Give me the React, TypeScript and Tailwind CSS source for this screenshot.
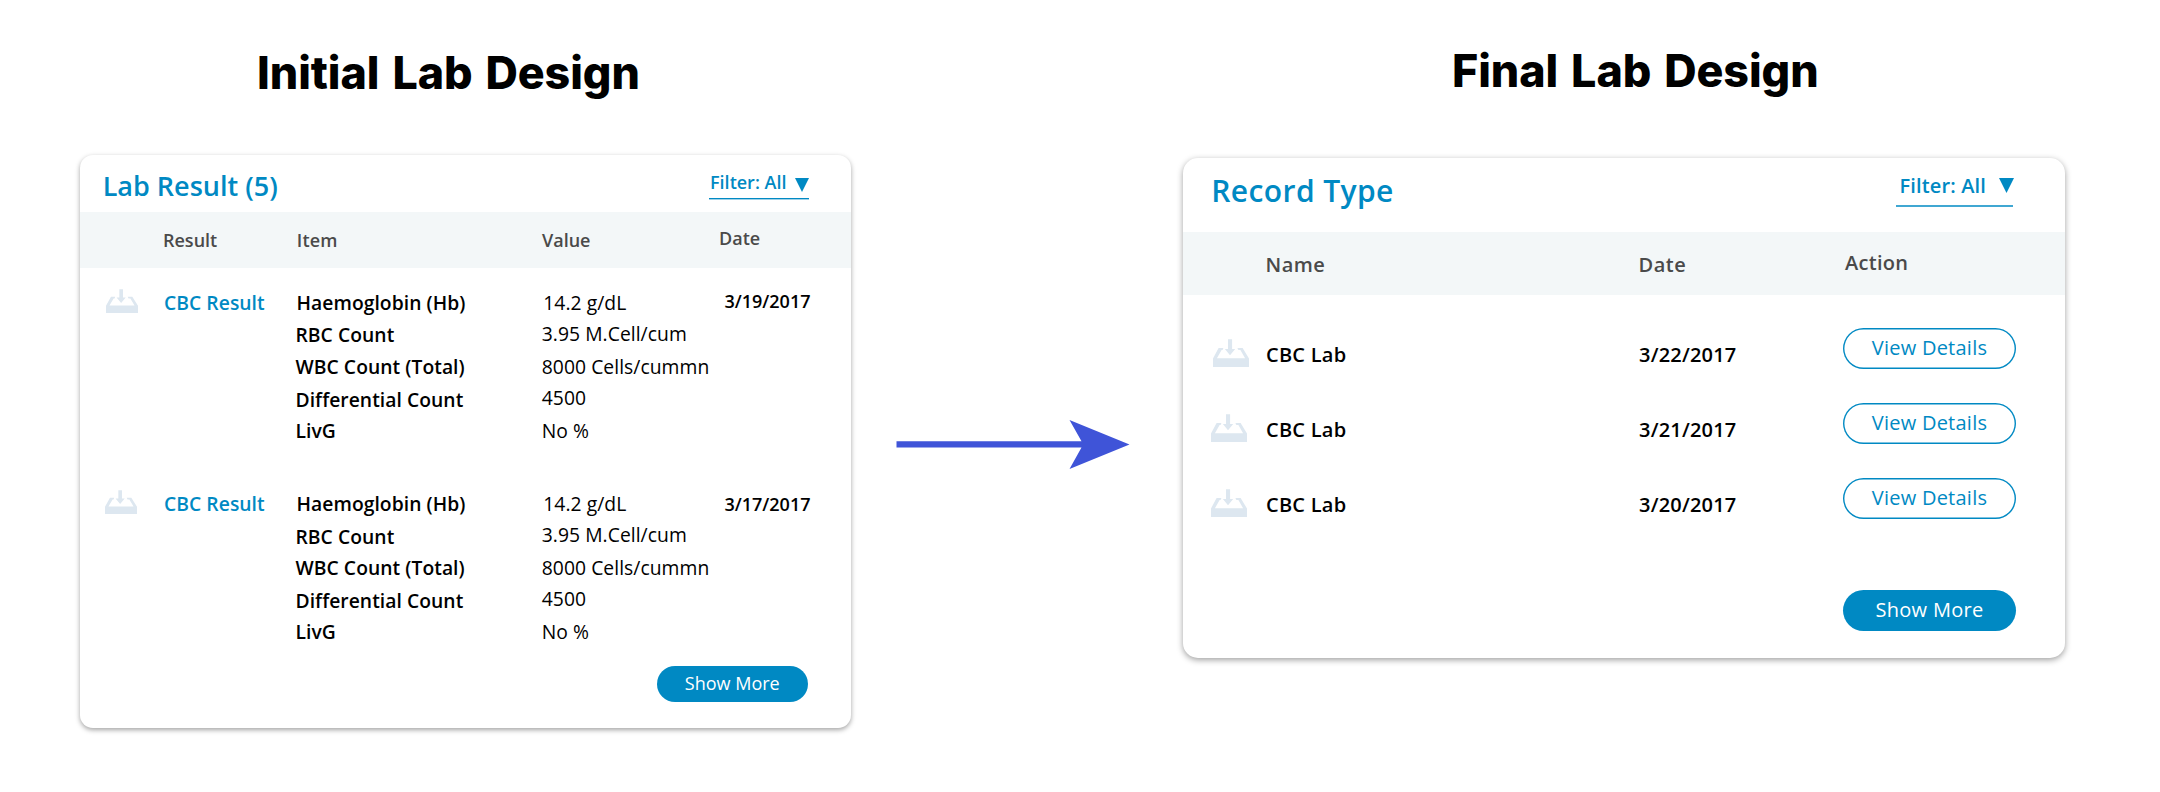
type Line = { text: string; gap: string };

const itemsA: Line[] = [
  { text: "Haemoglobin (Hb)", gap: "pl-px" },
  { text: "RBC Count", gap: "mt-[5px]" },
  { text: "WBC Count (Total)", gap: "mt-[5px]" },
  { text: "Differential Count", gap: "mt-[6px]" },
  { text: "LivG", gap: "mt-[4px]" },
];

const itemsB: Line[] = [
  { text: "Haemoglobin (Hb)", gap: "pl-px" },
  { text: "RBC Count", gap: "mt-[6px]" },
  { text: "WBC Count (Total)", gap: "mt-[4px]" },
  { text: "Differential Count", gap: "mt-[6px]" },
  { text: "LivG", gap: "mt-[4px]" },
];

const values: Line[] = [
  { text: "14.2 g/dL", gap: "pl-[1.5px]" },
  { text: "3.95 M.Cell/cum", gap: "mt-[4px]" },
  { text: "8000 Cells/cummn", gap: "mt-[6px]" },
  { text: "4500", gap: "mt-[4px]" },
  { text: "No %", gap: "mt-[6px]" },
];

const results = [
  { date: "3/19/2017", items: itemsA, row: "pt-[21px]", icon: "pl-[26px]", dateGap: "" },
  { date: "3/17/2017", items: itemsB, row: "pt-[46px]", icon: "pl-[24.5px]", dateGap: "pt-[2px]" },
];

const records = [
  { name: "CBC Lab", date: "3/22/2017", icon: "pl-[30px]" },
  { name: "CBC Lab", date: "3/21/2017", icon: "pl-[28px]" },
  { name: "CBC Lab", date: "3/20/2017", icon: "pl-[28px]" },
];

function TrayIcon({ className }: { className: string }) {
  return (
    <svg viewBox="0 0 36 28" className={className} fill="#dde7f0" preserveAspectRatio="none">
      <path d="M0 28V19.6L5.6 9H10.4L9.6 11H8.6L3.9 19.2H32.1L27.4 11H25.4L24.4 9H29.6L36 19.6V28Z" />
      <path d="M15 0.3H19.1V10H22.2L17 16.3L11.9 10H15Z" />
    </svg>
  );
}

function Caret({ className }: { className: string }) {
  return (
    <svg viewBox="0 0 14 14" className={className} fill="#0089c3">
      <path d="M0 0H14L7 14Z" />
    </svg>
  );
}

function InitialCard() {
  return (
    <div className="mt-[55px] h-[573px] rounded-[13px] bg-white shadow-[0_2px_5px_rgba(0,0,0,0.36)]">
      <div className="flex h-[57px] items-start justify-between pr-[42px] pl-[22.7px]">
        <h2 className="mt-3 text-[27px] leading-[37px] font-semibold text-[#0089c3]">Lab Result (5)</h2>
        <div className="mt-[15px] flex h-[29px] w-[100px] items-start border-b border-[#0089c3] pl-px text-[18px] leading-[24px] font-semibold text-[#0089c3] shadow-[0_1px_0_#9fd1e8]">
          <span className="w-[85px] whitespace-nowrap">Filter: All</span>
          <Caret className="mt-2 h-[14px] w-[14px] shrink-0" />
        </div>
      </div>
      <div className="grid h-[56px] grid-cols-[83px_133px_245px_178px_1fr] bg-[#f3f7f8] pt-[14px] text-[18px] leading-[24px] font-semibold text-[#4a4a4a]">
        <span />
        <span className="mt-[2px]">Result</span>
        <span className="mt-[2px] pl-[0.7px] tracking-[0.2px]">Item</span>
        <span className="mt-[2px] pl-px">Value</span>
        <span>Date</span>
      </div>
      {results.map((r) => (
        <div
          key={r.date}
          className={`grid grid-cols-[83px_132.5px_246.3px_177.2px_1fr] text-[19.3px] leading-[27px] text-black ${r.row}`}
        >
          <div className={r.icon}>
            <TrayIcon className="h-[24px] w-[32px]" />
          </div>
          <span className="pl-px font-semibold tracking-[0.05px] text-[#0089c3]">CBC Result</span>
          <div className="font-semibold tracking-[0.05px]">
            {r.items.map((l) => (
              <div key={l.text} className={l.gap}>{l.text}</div>
            ))}
          </div>
          <div className="tracking-[0.05px] whitespace-nowrap">
            {values.map((l) => (
              <div key={l.text} className={l.gap}>{l.text}</div>
            ))}
          </div>
          <span className={`pl-[5.4px] text-[18px] leading-[24px] font-semibold ${r.dateGap}`}>{r.date}</span>
        </div>
      ))}
      <div className="flex justify-end pt-[21px] pr-[43px]">
        <button className="flex h-[36px] w-[151.5px] items-center justify-center rounded-full bg-[#0089c3] pb-[2px] text-[18px] leading-[24px] text-white">
          Show More
        </button>
      </div>
    </div>
  );
}

function FinalCard() {
  return (
    <div className="mt-[60px] h-[500px] rounded-[15px] bg-white shadow-[0_2px_6px_rgba(0,0,0,0.38)]">
      <div className="flex h-[74px] items-start justify-between pr-[52px] pl-[28.3px] text-[#0089c3]">
        <h2 className="mt-3 text-[30px] leading-[41px] font-semibold tracking-[0.4px]">Record Type</h2>
        <div className="mt-[14px] flex h-[35px] w-[117px] items-start border-b-2 border-[#40a7d2] pl-[3.5px] text-[20px] leading-[27px] font-semibold tracking-[0.15px]">
          <span className="w-[99.5px] shrink-0 whitespace-nowrap">Filter: All</span>
          <Caret className="mt-[6px] h-[15px] w-[15px] shrink-0" />
        </div>
      </div>
      <div className="grid h-[63px] grid-cols-[82.5px_373px_206.5px_1fr] bg-[#f3f7f8] pt-[17px] text-[20px] leading-[27px] font-semibold tracking-[0.5px] text-[#4a4a4a]">
        <span />
        <span className="mt-[2px]">Name</span>
        <span className="mt-[2px]">Date</span>
        <span className="tracking-[0.3px]">Action</span>
      </div>
      <div className="mt-[33px] flex flex-col gap-[34px]">
        {records.map((r) => (
          <div
            key={r.date}
            className="grid h-[41px] grid-cols-[82px_373px_205px_1fr] text-[20px] leading-[27px]"
          >
            <div className={`pt-[11px] ${r.icon}`}>
              <TrayIcon className="h-[28px] w-[36px]" />
            </div>
            <span className="mt-[13px] pl-px font-semibold tracking-[0.25px] text-black">{r.name}</span>
            <span className="mt-[13px] pl-px font-semibold tracking-[0.2px] text-black">{r.date}</span>
            <button className="flex h-[41px] w-[173px] items-center justify-center rounded-full pb-[2px] tracking-[0.25px] text-[#0089c3] shadow-[inset_0_0_0_1.4px_#0089c3]">
              View Details
            </button>
          </div>
        ))}
      </div>
      <div className="flex justify-end pt-[71px] pr-[49px]">
        <button className="flex h-[41px] w-[173px] items-center justify-center rounded-full bg-[#0089c3] pb-[2px] text-[20px] leading-[27px] tracking-[0.3px] text-white">
          Show More
        </button>
      </div>
    </div>
  );
}

export default function App() {
  return (
    <main className="flex h-[792px] w-[2160px] items-start overflow-hidden bg-white pl-[80px] font-['Open_Sans','Noto_Sans',sans-serif]">
      <section className="w-[771px] shrink-0 pt-[46px]">
        <h1 className="pl-[177px] font-['Inter',sans-serif] text-[44.8px] leading-[54px] font-extrabold tracking-[-0.05px] whitespace-nowrap text-black [word-spacing:3.2px]">
          Initial Lab Design
        </h1>
        <InitialCard />
      </section>
      <svg viewBox="0 0 234 50" className="mt-[420px] ml-[45px] h-[50px] w-[234px] shrink-0" fill="#3f54d8">
        <path d="M0.5 21.2H185.5L173.5 0L233.5 24.5L173.5 49L185.5 27.6H0.5Z" />
      </svg>
      <section className="ml-[53px] w-[882px] shrink-0 pt-[44px]">
        <h1 className="pl-[269px] font-['Inter',sans-serif] text-[44.8px] leading-[54px] font-extrabold tracking-[-0.05px] whitespace-nowrap text-black [word-spacing:3.2px]">
          Final Lab Design
        </h1>
        <FinalCard />
      </section>
    </main>
  );
}
